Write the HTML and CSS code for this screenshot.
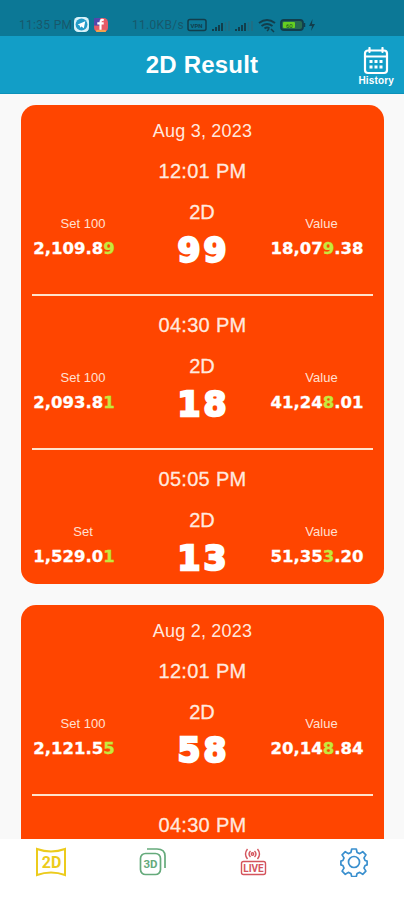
FILE: index.html
```html
<!DOCTYPE html>
<html lang="en">
<head>
  <meta charset="UTF-8">
  <meta name="viewport" content="width=device-width, initial-scale=1.0">
  <title>2D Result</title>
  <link rel="stylesheet" href="styles.css">
</head>
<body>

  <!-- Phone status bar -->
  <div class="status-bar">
    <span class="clock">11:35 PM</span>
    <svg class="app-icon" viewBox="0 0 14 14">
      <rect width="14" height="14" rx="4" fill="#d9f1f8"/>
      <circle cx="7" cy="7" r="5.5" fill="#249bc8"/>
      <path d="M3.5 7l7-3-1.3 6.5-2.3-1.6-1.2 1.2-.2-2z" fill="#fff"/>
    </svg>
    <svg class="app-icon second" viewBox="0 0 14 14">
      <rect x="1" y="1" width="13" height="13" rx="4" fill="#e65b67"/>
      <path d="M1 1h6v7H1z" fill="#5445ad"/>
      <path d="M3 12h9v2H3z" fill="#f5a04b"/>
      <path d="M10 3c-3-1-3 1-3 3v6M4 6h6" fill="none" stroke="#fff" stroke-width="2"/>
    </svg>
    <span class="speed">11.0KB/s</span>
    <svg class="status-icons" width="130" height="16" viewBox="0 0 130 16">
      <rect x="1" y="2.5" width="18" height="11" rx="2" fill="none" stroke="#123e4c" stroke-width="1.5"/>
      <text x="3.5" y="10.5" class="vpn">VPN</text>
      <path d="M26 14v-2M29 14v-4M32 14V8M35 14V6M49 14v-2M52 14v-4M55 14V8M58 14V6" stroke="#123e4c" stroke-width="2"/>
      <path d="M38.5 14V5M42 14V4M61.5 14V5M65 14V4" stroke="#246b80" stroke-width="1.5"/>
      <path d="M72 6q8-6 16 0M74.5 9q5.5-4 11 0M77.5 11.5q2.5-2 5 0" fill="none" stroke="#123e4c" stroke-width="2"/>
      <path d="M80 14l2-2M84 12l3 3" stroke="#123e4c" stroke-width="1.5"/>
      <rect x="94" y="3" width="22" height="10" rx="3" fill="#276b52" stroke="#123e4c" stroke-width="1.8"/>
      <rect x="96" y="5" width="12" height="6" rx="1" fill="#66cf22"/>
      <text x="99" y="10.5" class="battery">60</text>
      <path d="M117.5 6v4" stroke="#123e4c" stroke-width="1.5"/>
      <path d="M125.5 2l-3.5 7h3l-1 5 4-7h-3z" fill="#123e4c"/>
    </svg>
  </div>

  <header>
    <h1>2D Result</h1>
    <div class="history">
      <svg width="26" height="28" viewBox="0 0 26 28" fill="none" stroke="#fff" stroke-width="2.2">
        <rect x="2" y="3.5" width="22" height="22.5" rx="3"/>
        <path d="M2 9.5h22M6.5 1v4M19.5 1v4" stroke-linecap="round"/>
        <path d="M6.5 14.5h3M11.5 14.5h3M16.5 14.5h3M6.5 20h3M11.5 20h3M16.5 20h3" stroke-width="3"/>
      </svg>
      <span>History</span>
    </div>
  </header>

  <main>
    <section class="card">
      <h2>Aug 3, 2023</h2>
      <div class="session">
        <p class="time">12:01 PM</p>
        <div class="result">
          <div class="side"><span class="label">Set 100</span><b>2,109.8<i>9</i></b></div>
          <div class="middle"><span>2D</span><strong>99</strong></div>
          <div class="side value"><span class="label">Value</span><b>18,07<i>9</i>.38</b></div>
        </div>
      </div>
      <div class="session">
        <p class="time">04:30 PM</p>
        <div class="result">
          <div class="side"><span class="label">Set 100</span><b>2,093.8<i>1</i></b></div>
          <div class="middle"><span>2D</span><strong>18</strong></div>
          <div class="side value"><span class="label">Value</span><b>41,24<i>8</i>.01</b></div>
        </div>
      </div>
      <div class="session">
        <p class="time">05:05 PM</p>
        <div class="result">
          <div class="side"><span class="label">Set</span><b>1,529.0<i>1</i></b></div>
          <div class="middle"><span>2D</span><strong>13</strong></div>
          <div class="side value"><span class="label">Value</span><b>51,35<i>3</i>.20</b></div>
        </div>
      </div>
    </section>

    <section class="card">
      <h2>Aug 2, 2023</h2>
      <div class="session">
        <p class="time">12:01 PM</p>
        <div class="result">
          <div class="side"><span class="label">Set 100</span><b>2,121.5<i>5</i></b></div>
          <div class="middle"><span>2D</span><strong>58</strong></div>
          <div class="side value"><span class="label">Value</span><b>20,14<i>8</i>.84</b></div>
        </div>
      </div>
      <div class="session">
        <p class="time">04:30 PM</p>
      </div>
    </section>
  </main>

  <!-- Bottom tabs -->
  <nav>
    <a><svg width="32" height="30" viewBox="0 0 32 30">
      <path d="M2 2q14 5 28 0v26q-14-5-28 0z" fill="none" stroke="#eccb1c" stroke-width="2"/>
      <text x="16.5" y="20.5" class="tab-2d">2D</text>
    </svg></a>
    <a><svg width="28" height="30" viewBox="0 0 28 30" fill="none" stroke="#65aa7b" stroke-width="1.7">
      <rect x="2.5" y="6.5" width="20" height="21" rx="5"/>
      <path d="M9 2h10q8 0 8 7v12"/>
      <text x="12.5" y="21" class="tab-3d">3D</text>
    </svg></a>
    <a><svg width="28" height="30" viewBox="0 0 28 30" fill="none" stroke="#d4545c" stroke-width="1.4">
      <path d="M8.5 2q-4 5 0 10M11.5 4q-3 3 0 6M18.5 2q4 5 0 10M15.5 4q3 3 0 6"/>
      <circle cx="13.5" cy="7" r="1.2"/>
      <rect x="2.5" y="14.5" width="24" height="13" rx="2"/>
      <text x="14.5" y="24.8" class="tab-live">LIVE</text>
    </svg></a>
    <a><svg width="28" height="30" viewBox="0 0 28 30" fill="none" stroke="#398fce" stroke-width="1.7" stroke-linejoin="round">
      <path d="M11.7 2h4.6l.8 3.5 2.6 1.1 3-1.9 3.2 3.2-1.9 3 1.1 2.6 2 .6v3.8l-2 .6-1.1 2.6 1.9 3-3.2 3.2-3-1.9-2.6 1.1-.8 3h-4.6l-.8-3-2.6-1.1-3 1.9-3.2-3.2 1.9-3-1.1-2.6-2-.6v-3.8l2-.6L4 10.9l-1.9-3 3.2-3.2 3 1.9 2.6-1.1z"/>
      <circle cx="14" cy="15" r="5.5"/>
    </svg></a>
  </nav>

</body>
</html>
```
FILE: styles.css
```css
* {
  box-sizing: border-box;
}

body {
  font-family: "Liberation Sans", Arial, sans-serif;
  background: #f9f9f9;
  color: #fff;
  margin: 0;
  height: 900px;
  display: flex;
  flex-direction: column;
  overflow: hidden;
}

h1, h2, p {
  margin: 0;
}

.status-bar {
  flex: none;
  height: 36px;
  padding: 13px 0 0 19px;
  display: flex;
  align-items: center;
  background: #0c7896;
  color: #17586c;
  font-family: Roboto, sans-serif;
  font-size: 12px;
}

.clock {
  width: 55px;
  letter-spacing: 0.3px;
  white-space: nowrap;
}

.app-icon {
  width: 15px;
  height: 15px;
}

.second {
  margin-left: 4px;
}

.speed {
  width: 55px;
  margin-left: 24px;
  letter-spacing: 0.3px;
}

.vpn {
  font-size: 6px;
  font-weight: bold;
  fill: #123e4c;
}

.battery {
  font-size: 6px;
  fill: #174e24;
}

header {
  flex: none;
  height: 58px;
  padding: 0 10px;
  display: grid;
  grid-template-columns: 1fr auto 1fr;
  align-items: center;
  background: #129ec7;
  border-bottom: 1px solid #0b91b9;
}

h1 {
  grid-column: 2;
  font-size: 24px;
  letter-spacing: 0.2px;
  white-space: nowrap;
}

.history {
  justify-self: end;
  display: flex;
  flex-direction: column;
  align-items: center;
  font-size: 10px;
  font-weight: bold;
  line-height: 11px;
  letter-spacing: 0.15px;
  padding-top: 3px;
}

main {
  flex: 1;
  min-height: 0;
  overflow: hidden;
  padding: 11px 20px 0 21px;
}

.card {
  background: #ff4500;
  border-radius: 15px;
  padding: 15px 11px 0;
  margin-bottom: 21px;
  color: #ffe9df;
}

h2 {
  font-size: 18px;
  font-weight: normal;
  line-height: 22px;
  letter-spacing: 0.2px;
  text-align: center;
}

.session {
  padding-top: 18px;
}

.session + .session {
  margin-top: 25px;
  border-top: 2px solid #ffe3cc;
}

.session:last-child {
  min-height: 136px;
}

.time {
  font-size: 20px;
  line-height: 22px;
  letter-spacing: 0.3px;
  text-align: center;
  -webkit-text-stroke: 0.3px #ffe9df;
}

.result {
  display: grid;
  grid-template-columns: 84px 1fr 94px;
  padding: 19px 9px 0 0;
}

.middle {
  display: flex;
  flex-direction: column;
  align-items: center;
  padding-left: 18px;
  font-size: 20px;
  line-height: 22px;
  -webkit-text-stroke: 0.3px #ffe9df;
}

.middle strong {
  font-family: "DejaVu Sans", sans-serif;
  font-size: 33px;
  line-height: 36px;
  letter-spacing: 3px;
  margin: 10px -3px 0 0;
  color: #fff;
  -webkit-text-stroke: 2.4px #fff;
}

.side {
  display: flex;
  flex-direction: column;
  align-items: center;
  padding-top: 15px;
  color: #ffe0d2;
}

.label {
  font-size: 13px;
  line-height: 16px;
  padding-left: 18px;
}

.value .label {
  padding-left: 9px;
}

.side b {
  font-family: "DejaVu Sans", sans-serif;
  font-size: 16.5px;
  line-height: 20px;
  margin-top: 7px;
  color: #fff;
  white-space: nowrap;
  -webkit-text-stroke: 0.3px;
}

.side i {
  font-style: normal;
  color: #c5e83e;
}

nav {
  flex: none;
  height: 61px;
  display: grid;
  grid-template-columns: repeat(4, 1fr);
  justify-items: center;
  padding-top: 8px;
  background: #fff;
}

nav text {
  font-family: Roboto, sans-serif;
  font-weight: bold;
  text-anchor: middle;
  stroke: none;
}

.tab-2d {
  font-size: 16px;
  fill: #eccb1c;
}

.tab-3d {
  font-size: 11.5px;
  fill: #65aa7b;
}

.tab-live {
  font-size: 10px;
  fill: #d4545c;
}
```
